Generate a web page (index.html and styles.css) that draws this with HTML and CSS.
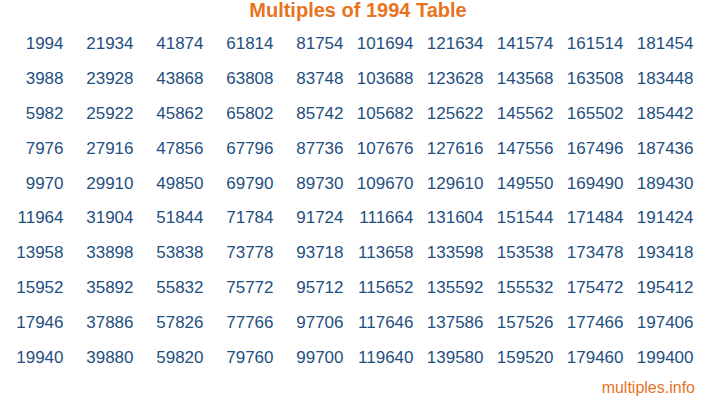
FILE: index.html
```html
<!DOCTYPE html>
<html>
<head>
<meta charset="utf-8">
<link rel="stylesheet" href="styles.css">
</head>
<body>
<div class="page">
  <h1 class="title">Multiples of 1994 Table</h1>
  <div class="grid" id="grid"></div>
  <div class="footer">multiples.info</div>
</div>
<script src="script.js"></script>
</body>
</html>
```
FILE: styles.css
```css
html, body {
  margin: 0;
  padding: 0;
  background: #ffffff;
}
.page {
  width: 716px;
  height: 400px;
  font-family: "Liberation Sans", Arial, sans-serif;
  position: relative;
  overflow: hidden;
}
.title {
  margin: 0;
  font-size: 20px;
  line-height: 20px;
  font-weight: bold;
  color: #e8731f;
  text-align: center;
  padding-left: 0;
}
.grid {
  margin-top: 7px;
  width: 700px;
  display: grid;
  grid-template-columns: repeat(10, 70px);
  grid-auto-rows: 34.9px;
  grid-auto-flow: column;
  grid-template-rows: repeat(10, 34.9px);
}
.cell {
  text-align: right;
  padding-right: 6.5px;
  font-size: 17px;
  line-height: 34.9px;
  color: #1f4f7f;
}
.footer {
  text-align: right;
  padding-right: 21px;
  font-size: 16px;
  line-height: 20px;
  color: #e8731f;
  margin-top: 2px;
}
```
FILE: script.js
```js
var g = document.getElementById('grid');
for (var i = 1; i <= 100; i++) {
  var d = document.createElement('div');
  d.className = 'cell';
  d.textContent = String(1994 * i);
  g.appendChild(d);
}
```
